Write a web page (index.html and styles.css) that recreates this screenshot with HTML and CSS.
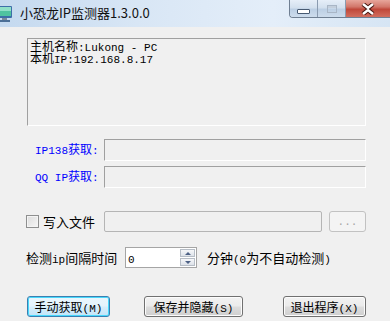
FILE: index.html
```html
<!DOCTYPE html>
<html lang="zh-CN">
<head>
    <meta charset="UTF-8">
    <title>小恐龙IP监测器1.3.0.0</title>
    <link rel="stylesheet" href="styles.css">
</head>
<body>
    <div class="window">
        <div class="titlebar">
            <svg class="app-icon" width="14" height="18" viewBox="0 0 14 18">
                <rect x="-3" y="1" width="15" height="12" rx="1" fill="#3d6fa8"/>
                <rect x="-2" y="2" width="13" height="9" fill="#4fc3a0"/>
                <rect x="-2" y="2" width="13" height="4" fill="#8fe0c8"/>
                <rect x="2" y="13" width="5" height="2" fill="#7c8a99"/>
                <rect x="-1" y="15" width="11" height="2" fill="#4c6f96"/>
            </svg>
            <span class="title">小恐龙IP监测器1.3.0.0</span>
            <div class="caption-buttons">
                <div class="cap cap-min"><span class="min-bar"></span></div>
                <div class="cap cap-max"><span class="max-box"></span></div>
                <div class="cap cap-close">
                    <svg width="16" height="12" viewBox="0 0 16 12">
                        <path d="M3 1 L8 5 L13 1 M3 11 L8 7 L13 11" stroke="#4a1a14" stroke-width="4.5" fill="none"/>
                        <path d="M3 1 L8 5 L13 1 M3 11 L8 7 L13 11" stroke="#fff" stroke-width="2.5" fill="none"/>
                    </svg>
                </div>
            </div>
        </div>

        <div class="client">
            <div class="info">
                <div class="info-line">主机名称<span class="en">:Lukong - PC</span></div>
                <div class="info-line">本机<span class="en">IP:192.168.8.17</span></div>
            </div>

            <div class="field-row first">
                <span class="label blue"><span class="en">IP138</span>获取<span class="en">:</span></span>
                <div class="field"></div>
            </div>
            <div class="field-row">
                <span class="label blue"><span class="en">QQ IP</span>获取<span class="en">:</span></span>
                <div class="field"></div>
            </div>

            <div class="file-row">
                <span class="checkbox"></span>
                <span class="check-text">写入文件</span>
                <div class="file-field"></div>
                <div class="browse"><span class="en">...</span></div>
            </div>

            <div class="interval-row">
                <span class="interval-label">检测<span class="en">ip</span>间隔时间</span>
                <div class="spinner">
                    <span class="spin-value"><span class="en">0</span></span>
                    <div class="spin-buttons">
                        <span class="spin-btn"><span class="arrow-up"></span></span>
                        <span class="spin-btn"><span class="arrow-down"></span></span>
                    </div>
                </div>
                <span class="unit">分钟<span class="en">(0</span>为不自动检测<span class="en">)</span></span>
            </div>

            <div class="button-row">
                <button class="btn btn-default">手动获取<span class="en">(M)</span></button>
                <button class="btn btn-save">保存并隐藏<span class="en">(S)</span></button>
                <button class="btn btn-exit">退出程序<span class="en">(X)</span></button>
            </div>
        </div>
    </div>
</body>
</html>
```

FILE: styles.css
```css
body {
    margin: 0;
    width: 390px;
    height: 321px;
    overflow: hidden;
    background-color: #f0f0f0;
    font-family: "Noto Sans CJK SC", sans-serif;
    font-size: 12px;
    color: #000;
}
.en {
    font-family: "Liberation Mono", monospace;
    font-size: 11px;
}
.titlebar {
    height: 27px;
    display: flex;
    align-items: flex-start;
    background: linear-gradient(to right, #c4d9ef, #d8e6f5 35%, #e4eef9 70%, #d6e5f4);
}
.app-icon {
    margin-top: 5px;
    flex-shrink: 0;
}
.title {
    margin-left: 6px;
    margin-top: 5px;
    font-size: 13px;
    line-height: 16px;
    color: #111;
}
.caption-buttons {
    margin-left: auto;
    display: flex;
    height: 18px;
    border: 1px solid #6f7f92;
    border-top: none;
    border-right: none;
    border-bottom-left-radius: 4px;
    overflow: hidden;
    box-sizing: border-box;
}
.cap {
    height: 17px;
    display: flex;
    align-items: center;
    justify-content: center;
}
.cap-min,
.cap-max {
    width: 28px;
    background: linear-gradient(#e6eef8, #d3e0ee 45%, #bccfe4 55%, #cddcec);
    border-right: 1px solid #8a9bb0;
    box-sizing: border-box;
}
.min-bar {
    width: 11px;
    height: 3px;
    margin-top: 5px;
    background: #fff;
    border: 1px solid #475a72;
    border-radius: 1px;
}
.max-box {
    width: 8px;
    height: 6px;
    border: 1px solid #a9b6c6;
    box-shadow: inset 0 2px 0 #c4cfdc;
}
.cap-close {
    width: 44px;
    background: linear-gradient(#e7a69b, #d2776a 40%, #c0483a 55%, #d26e5e);
}
.client {
    padding: 11px 24px 0 27px;
}
.info {
    height: 88px;
    box-sizing: border-box;
    border-top: 1px solid #a0a0a0;
    border-left: 1px solid #a0a0a0;
    border-right: 1px solid #fff;
    border-bottom: 1px solid #fff;
    padding: 1px 2px 0;
}
.info-line {
    height: 12px;
    line-height: 12px;
    white-space: nowrap;
}
.field-row {
    display: flex;
    align-items: center;
    margin-top: 5px;
}
.field-row.first {
    margin-top: 13px;
}
.label {
    width: 69px;
    margin-left: 8px;
    line-height: 14px;
}
.blue {
    color: #0000ff;
}
.field {
    flex: 1;
    height: 22px;
    box-sizing: border-box;
    border-top: 1px solid #a0a0a0;
    border-left: 1px solid #a0a0a0;
    border-right: 1px solid #fff;
    border-bottom: 1px solid #fff;
}
.file-row {
    display: flex;
    align-items: center;
    margin-top: 23px;
    height: 21px;
}
.checkbox {
    width: 13px;
    height: 13px;
    box-sizing: border-box;
    margin-left: -1px;
    border: 1px solid #8e8f8f;
    background: linear-gradient(135deg, #dcdcdc, #f6f6f6);
    box-shadow: inset 0 0 0 1px #f4f4f4;
}
.check-text {
    margin-left: 4px;
    width: 61px;
    font-size: 13px;
}
.file-field {
    width: 218px;
    height: 21px;
    box-sizing: border-box;
    border: 1px solid #b5b5b5;
    border-radius: 2px;
}
.browse {
    width: 37px;
    height: 21px;
    box-sizing: border-box;
    margin-left: 7px;
    border: 1px solid #c2c2c2;
    border-radius: 3px;
    background: #f4f4f4;
    color: #a6a6a6;
    display: flex;
    align-items: center;
    justify-content: center;
}
.interval-row {
    display: flex;
    align-items: center;
    margin-top: 15px;
    height: 21px;
}
.interval-label {
    width: 99px;
    margin-left: -1px;
    font-size: 13px;
}
.spinner {
    width: 72px;
    height: 21px;
    box-sizing: border-box;
    border: 1px solid #a5a5a5;
    background: #fff;
    display: flex;
}
.spin-value {
    flex: 1;
    padding-left: 2px;
    line-height: 19px;
}
.spin-buttons {
    width: 15px;
    display: flex;
    flex-direction: column;
    padding: 1px 1px 1px 0;
    gap: 1px;
}
.spin-btn {
    flex: 1;
    border: 1px solid #b6bdc6;
    background: linear-gradient(#f6f7f9, #dde2e9);
    display: flex;
    align-items: center;
    justify-content: center;
}
.arrow-up,
.arrow-down {
    width: 0;
    height: 0;
    border-left: 3px solid transparent;
    border-right: 3px solid transparent;
}
.arrow-up {
    border-bottom: 3px solid #4d6185;
}
.arrow-down {
    border-top: 3px solid #4d6185;
}
.unit {
    margin-left: 10px;
    font-size: 13px;
}
.button-row {
    display: flex;
    margin-top: 28px;
}
.btn {
    height: 21px;
    padding: 0;
    font-family: "Noto Sans CJK SC", sans-serif;
    font-size: 12px;
    color: #000;
    border: 1px solid #707070;
    border-radius: 3px;
    background: linear-gradient(#f2f2f2, #ebebeb 48%, #dddddd 52%, #cfcfcf);
    box-shadow: inset 0 0 0 1px #fcfcfc;
}
.btn-default {
    width: 83px;
    border-color: #3c7fb1;
    background: linear-gradient(#eaf6fd, #e4f3fc 48%, #d6eefb 52%, #c2e4f8);
    box-shadow: inset 0 0 0 1px #48d8fb;
}
.btn-save {
    width: 99px;
    margin-left: 34px;
}
.btn-exit {
    width: 83px;
    margin-left: 40px;
}
```
